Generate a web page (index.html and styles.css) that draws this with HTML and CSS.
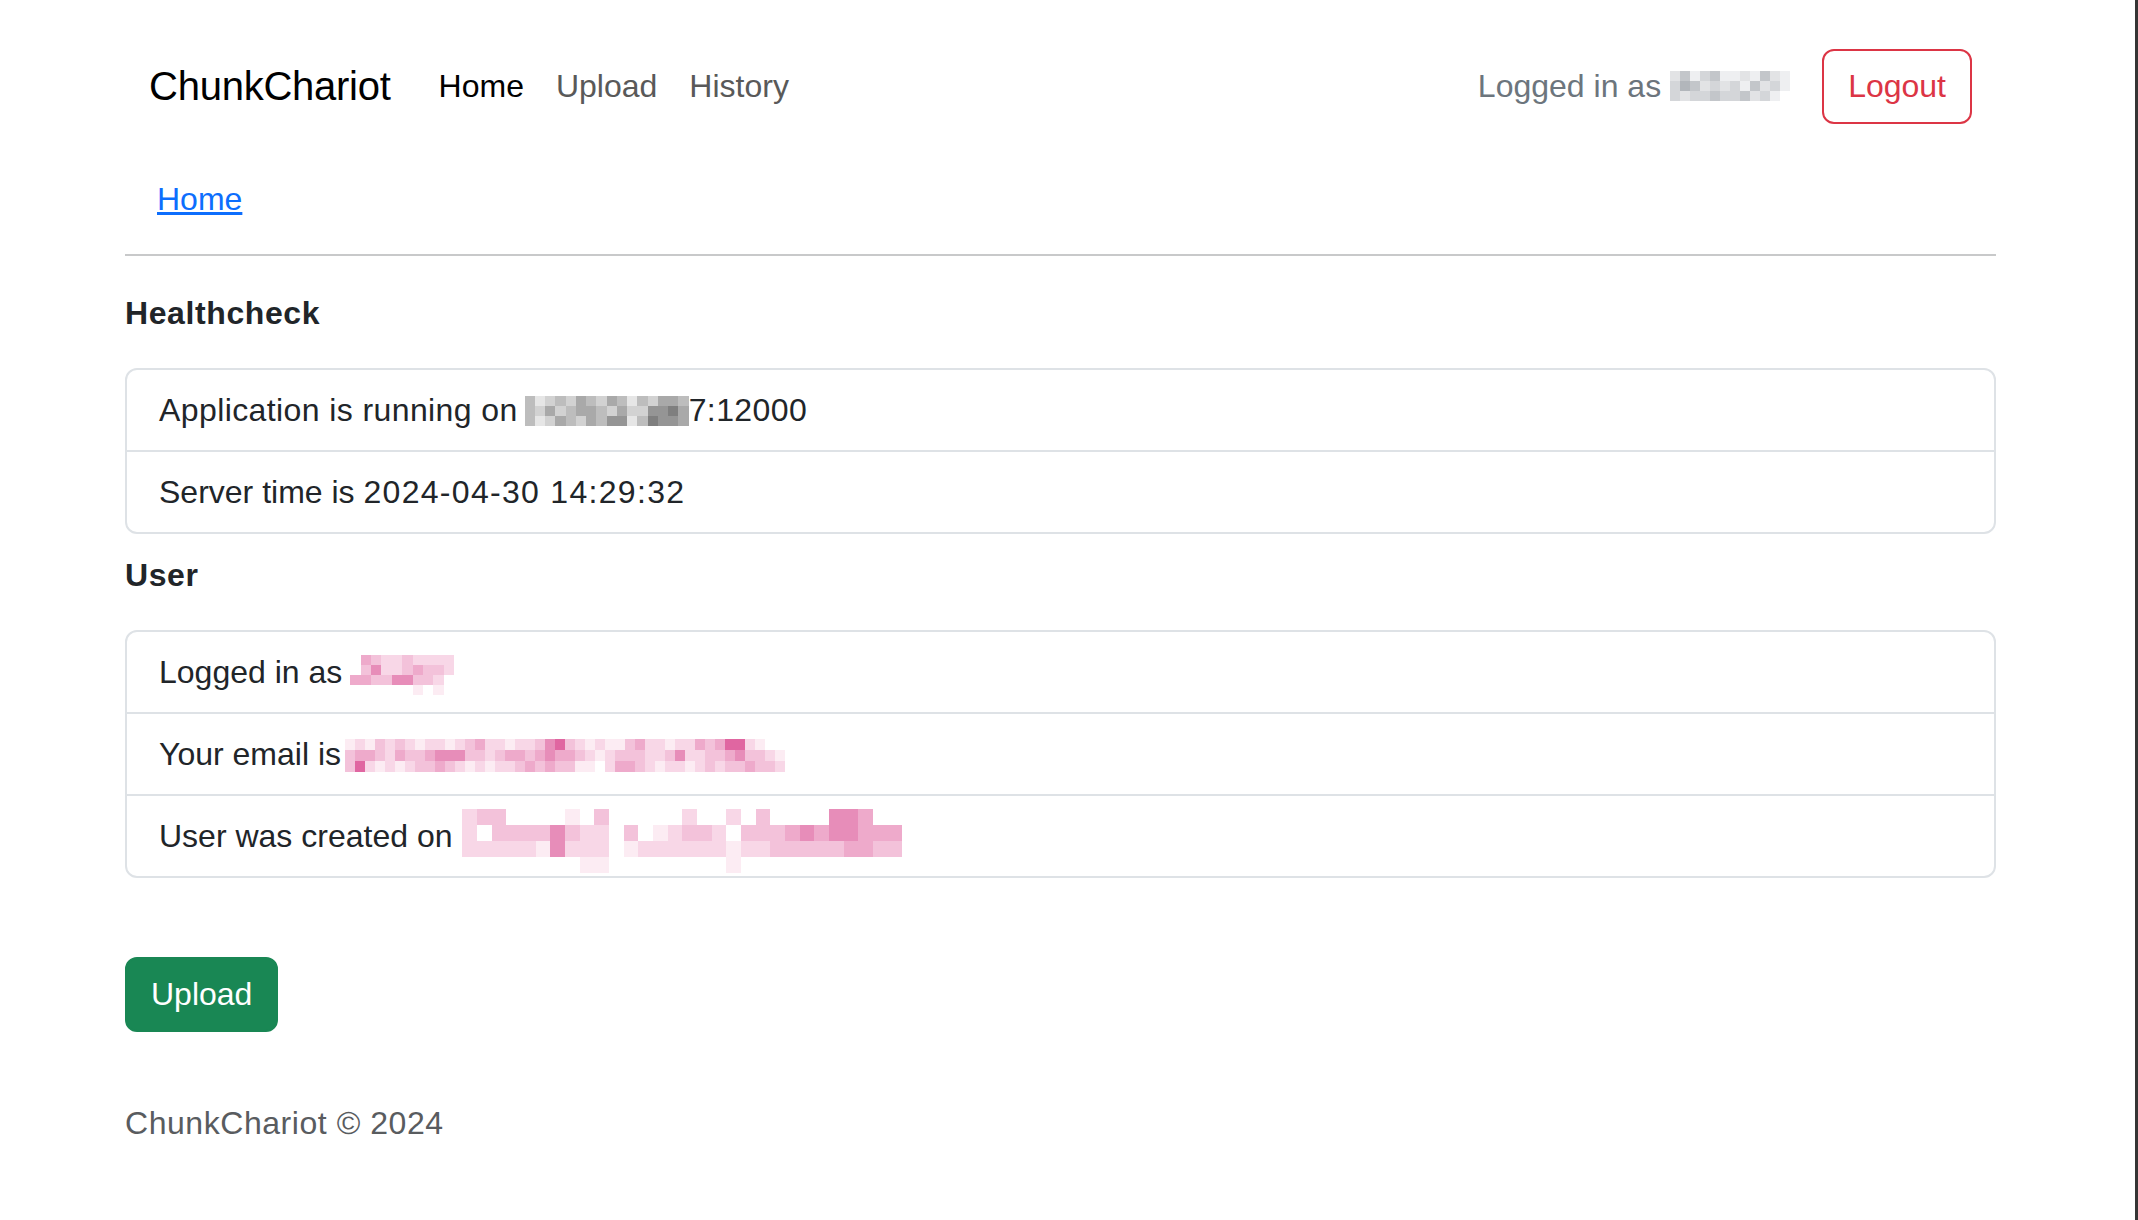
FILE: index.html
```html
<!DOCTYPE html>
<html lang="en">
<head>
<meta charset="utf-8">
<title>ChunkChariot</title>
<link rel="stylesheet" href="styles.css">
</head>
<body>
<div class="page">
  <nav class="navbar">
    <a class="brand" href="#">ChunkChariot</a>
    <ul class="nav-links">
      <li><a class="nav-link active" href="#">Home</a></li>
      <li><a class="nav-link" href="#">Upload</a></li>
      <li><a class="nav-link" href="#">History</a></li>
    </ul>
    <div class="nav-right">
      <span class="nav-text">Logged in as</span>
      <span class="mz mz-nav"><i class="n2"></i><i class="n4"></i><i class="n1"></i><i class="n3"></i><i class="n4"></i><i class="n1"></i><i class="n1"></i><i class="n2"></i><i class="n1"></i><i class="n4"></i><i class="n2"></i><i class="n1"></i><i class="n3"></i><i class="n5"></i><i class="n4"></i><i class="n2"></i><i class="n3"></i><i class="n2"></i><i class="n3"></i><i class="n1"></i><i class="n4"></i><i class="n2"></i><i class="n3"></i><i class="n1"></i><i class="n3"></i><i class="n2"></i><i class="n3"></i><i class="n3"></i><i class="n4"></i><i class="n3"></i><i class="n3"></i><i class="n4"></i><i class="n2"></i><i class="n3"></i><i class="n1"></i><i class="n0"></i></span>
      <button class="btn btn-outline-danger" type="button">Logout</button>
    </div>
  </nav>

  <nav class="crumbs"><a class="crumb-link" href="#">Home</a></nav>
  <hr class="rule">

  <div class="section-title">Healthcheck</div>
  <ul class="list-group">
    <li class="item item-wide">Application is running on<span class="mz mz-host"><i class="g3"></i><i class="g1"></i><i class="g2"></i><i class="g3"></i><i class="g2"></i><i class="g4"></i><i class="g3"></i><i class="g2"></i><i class="g4"></i><i class="g3"></i><i class="g1"></i><i class="g3"></i><i class="g2"></i><i class="g4"></i><i class="g4"></i><i class="g3"></i><i class="g3"></i><i class="g2"></i><i class="g4"></i><i class="g2"></i><i class="g3"></i><i class="g4"></i><i class="g4"></i><i class="g3"></i><i class="g2"></i><i class="g4"></i><i class="g2"></i><i class="g2"></i><i class="g5"></i><i class="g5"></i><i class="g6"></i><i class="g4"></i><i class="g3"></i><i class="g1"></i><i class="g2"></i><i class="g4"></i><i class="g3"></i><i class="g2"></i><i class="g4"></i><i class="g3"></i><i class="g5"></i><i class="g5"></i><i class="g1"></i><i class="g3"></i><i class="g6"></i><i class="g5"></i><i class="g5"></i><i class="g4"></i></span>7:12000</li>
    <li class="item">Server time is&nbsp;<span class="stamp">2024-04-30 14:29:32</span></li>
  </ul>

  <div class="section-title section-title-next">User</div>
  <ul class="list-group">
    <li class="item">Logged in as<span class="mz mz-login"><i class="k0"></i><i class="k4"></i><i class="k3"></i><i class="k2"></i><i class="k2"></i><i class="k3"></i><i class="k2"></i><i class="k2"></i><i class="k2"></i><i class="k2"></i><i class="k0"></i><i class="k3"></i><i class="k5"></i><i class="k2"></i><i class="k2"></i><i class="k3"></i><i class="k4"></i><i class="k3"></i><i class="k3"></i><i class="k2"></i><i class="k4"></i><i class="k4"></i><i class="k3"></i><i class="k3"></i><i class="k5"></i><i class="k5"></i><i class="k3"></i><i class="k3"></i><i class="k2"></i><i class="k0"></i><i class="k0"></i><i class="k0"></i><i class="k0"></i><i class="k0"></i><i class="k0"></i><i class="k0"></i><i class="k1"></i><i class="k0"></i><i class="k1"></i><i class="k0"></i></span></li>
    <li class="item">Your email is<span class="mz mz-email"><i class="k1"></i><i class="k2"></i><i class="k1"></i><i class="k3"></i><i class="k2"></i><i class="k3"></i><i class="k2"></i><i class="k1"></i><i class="k2"></i><i class="k2"></i><i class="k1"></i><i class="k2"></i><i class="k3"></i><i class="k4"></i><i class="k2"></i><i class="k2"></i><i class="k1"></i><i class="k2"></i><i class="k2"></i><i class="k3"></i><i class="k5"></i><i class="k6"></i><i class="k3"></i><i class="k2"></i><i class="k1"></i><i class="k2"></i><i class="k1"></i><i class="k1"></i><i class="k3"></i><i class="k4"></i><i class="k2"></i><i class="k2"></i><i class="k1"></i><i class="k2"></i><i class="k2"></i><i class="k4"></i><i class="k3"></i><i class="k4"></i><i class="k6"></i><i class="k6"></i><i class="k2"></i><i class="k1"></i><i class="k0"></i><i class="k0"></i><i class="k3"></i><i class="k4"></i><i class="k4"></i><i class="k3"></i><i class="k2"></i><i class="k4"></i><i class="k3"></i><i class="k3"></i><i class="k4"></i><i class="k5"></i><i class="k5"></i><i class="k5"></i><i class="k3"></i><i class="k3"></i><i class="k2"></i><i class="k3"></i><i class="k4"></i><i class="k4"></i><i class="k3"></i><i class="k4"></i><i class="k5"></i><i class="k4"></i><i class="k4"></i><i class="k3"></i><i class="k2"></i><i class="k1"></i><i class="k2"></i><i class="k3"></i><i class="k3"></i><i class="k3"></i><i class="k2"></i><i class="k2"></i><i class="k3"></i><i class="k5"></i><i class="k2"></i><i class="k2"></i><i class="k3"></i><i class="k3"></i><i class="k4"></i><i class="k5"></i><i class="k3"></i><i class="k3"></i><i class="k2"></i><i class="k1"></i><i class="k3"></i><i class="k6"></i><i class="k2"></i><i class="k1"></i><i class="k2"></i><i class="k1"></i><i class="k2"></i><i class="k3"></i><i class="k3"></i><i class="k4"></i><i class="k3"></i><i class="k2"></i><i class="k1"></i><i class="k2"></i><i class="k1"></i><i class="k2"></i><i class="k2"></i><i class="k3"></i><i class="k4"></i><i class="k3"></i><i class="k4"></i><i class="k3"></i><i class="k3"></i><i class="k1"></i><i class="k1"></i><i class="k0"></i><i class="k2"></i><i class="k4"></i><i class="k4"></i><i class="k3"></i><i class="k2"></i><i class="k1"></i><i class="k2"></i><i class="k2"></i><i class="k1"></i><i class="k2"></i><i class="k3"></i><i class="k2"></i><i class="k3"></i><i class="k3"></i><i class="k4"></i><i class="k3"></i><i class="k3"></i><i class="k2"></i></span></li>
    <li class="item">User was created on<span class="mz mz-created"><i class="k2"></i><i class="k3"></i><i class="k3"></i><i class="k0"></i><i class="k0"></i><i class="k0"></i><i class="k0"></i><i class="k1"></i><i class="k0"></i><i class="k3"></i><i class="k0"></i><i class="k0"></i><i class="k0"></i><i class="k0"></i><i class="k0"></i><i class="k2"></i><i class="k0"></i><i class="k0"></i><i class="k2"></i><i class="k0"></i><i class="k3"></i><i class="k0"></i><i class="k0"></i><i class="k0"></i><i class="k0"></i><i class="k5"></i><i class="k5"></i><i class="k4"></i><i class="k0"></i><i class="k0"></i><i class="k2"></i><i class="k0"></i><i class="k3"></i><i class="k3"></i><i class="k3"></i><i class="k3"></i><i class="k5"></i><i class="k3"></i><i class="k2"></i><i class="k2"></i><i class="k0"></i><i class="k3"></i><i class="k0"></i><i class="k1"></i><i class="k2"></i><i class="k3"></i><i class="k3"></i><i class="k2"></i><i class="k0"></i><i class="k3"></i><i class="k3"></i><i class="k3"></i><i class="k4"></i><i class="k5"></i><i class="k4"></i><i class="k5"></i><i class="k5"></i><i class="k4"></i><i class="k4"></i><i class="k4"></i><i class="k2"></i><i class="k2"></i><i class="k2"></i><i class="k2"></i><i class="k2"></i><i class="k1"></i><i class="k5"></i><i class="k2"></i><i class="k2"></i><i class="k2"></i><i class="k0"></i><i class="k1"></i><i class="k2"></i><i class="k2"></i><i class="k2"></i><i class="k2"></i><i class="k2"></i><i class="k2"></i><i class="k1"></i><i class="k2"></i><i class="k2"></i><i class="k3"></i><i class="k3"></i><i class="k3"></i><i class="k3"></i><i class="k3"></i><i class="k4"></i><i class="k4"></i><i class="k3"></i><i class="k3"></i><i class="k0"></i><i class="k0"></i><i class="k0"></i><i class="k0"></i><i class="k0"></i><i class="k0"></i><i class="k0"></i><i class="k0"></i><i class="k1"></i><i class="k1"></i><i class="k0"></i><i class="k0"></i><i class="k0"></i><i class="k0"></i><i class="k0"></i><i class="k0"></i><i class="k0"></i><i class="k0"></i><i class="k1"></i><i class="k0"></i><i class="k0"></i><i class="k0"></i><i class="k0"></i><i class="k0"></i><i class="k0"></i><i class="k0"></i><i class="k0"></i><i class="k0"></i><i class="k0"></i><i class="k0"></i></span></li>
  </ul>

  <button class="btn btn-success" type="button">Upload</button>

  <footer class="footer">ChunkChariot © 2024</footer>
</div>
</body>
</html>
```

FILE: styles.css
```css
html, body {
  margin: 0;
  padding: 0;
  background: #ffffff;
}

body {
  min-height: 1220px;
  box-sizing: border-box;
  border-right: 3px solid #353535;
  font-family: "Liberation Sans", Arial, sans-serif;
  font-size: 32px;
  line-height: 48px;
  color: #212529;
}

.page {
  width: 1871px;
  margin-left: 125px;
  padding-bottom: 40px;
}

/* ---------- navbar ---------- */
.navbar {
  display: flex;
  align-items: center;
  margin-top: 30px;
  padding: 16px 24px;
}

.brand {
  font-size: 40px;
  line-height: 60px;
  letter-spacing: -0.25px;
  padding: 10px 0;
  margin-right: 32px;
  color: #000000;
  text-decoration: none;
}

.nav-links {
  display: flex;
  list-style: none;
  margin: 0;
  padding: 0;
}

.nav-link {
  display: block;
  padding: 16px 16px;
  color: #595959;
  text-decoration: none;
}

.nav-link.active {
  color: #000000;
}

.nav-right {
  display: flex;
  align-items: center;
  margin-left: auto;
}

.nav-text {
  color: #6c757d;
  padding: 16px 0;
}

/* ---------- buttons ---------- */
.btn {
  font: inherit;
  font-size: 32px;
  line-height: 47px;
  padding: 12px 24px;
  border: 2px solid transparent;
  border-radius: 12px;
  background: transparent;
  cursor: pointer;
}

.btn-outline-danger {
  margin-left: 32px;
  color: #dc3545;
  border-color: #dc3545;
}

.btn-success {
  display: block;
  margin-top: 79px;
  color: #ffffff;
  background: #198754;
  border-color: #198754;
}

/* ---------- breadcrumb ---------- */
.crumbs {
  margin-top: 33px;
  padding-left: 32px;
}

.crumb-link {
  color: #0d6efd;
  text-decoration: underline;
}

.rule {
  margin: 31px 0 0;
  border: 0;
  border-top: 2px solid #c8c9ca;
  height: 0;
}

/* ---------- sections ---------- */
.section-title {
  font-weight: 700;
  letter-spacing: 0.6px;
  margin-top: 33px;
  margin-bottom: 31px;
}

.section-title-next {
  margin-top: 17px;
  margin-bottom: 31px;
}

.list-group {
  list-style: none;
  margin: 0;
  padding: 0;
  border: 2px solid #dee2e6;
  border-radius: 12px;
}

.item {
  display: flex;
  align-items: flex-start;
  padding: 16px 32px;
  line-height: 48px;
}

.item + .item {
  border-top: 2px solid #dee2e6;
}

.item-wide {
  letter-spacing: 0.4px;
}

.stamp {
  letter-spacing: 1.3px;
}

/* ---------- footer ---------- */
.footer {
  margin-top: 67px;
  letter-spacing: 0.55px;
  color: #595c5f;
}

/* ---------- pixelated (redacted) blocks ---------- */
.mz {
  display: grid;
  flex: none;
}

.mz i {
  display: block;
}

.mz-nav {
  margin-left: 9px;
  grid-template-columns: repeat(12, 10px);
  grid-auto-rows: 10px;
}

.mz-host {
  margin: 10px 0 0 7px;
  grid-template-columns: repeat(16, 10.25px);
  grid-auto-rows: 10px;
}

.mz-login {
  margin: 7px 0 0 8px;
  grid-template-columns: repeat(10, 10.4px);
  grid-auto-rows: 10px;
}

.mz-email {
  margin: 9px 0 0 4px;
  grid-template-columns: repeat(44, 10px);
  grid-auto-rows: 11px;
}

.mz-created {
  margin: -3px 0 -13px 10px;
  grid-template-columns: repeat(30, 14.67px);
  grid-auto-rows: 16px;
}

/* navbar grey */
.n0 { background: #ffffff; }
.n1 { background: #eeeff1; }
.n2 { background: #e2e3e5; }
.n3 { background: #d4d6d9; }
.n4 { background: #c3c6ca; }
.n5 { background: #b2b6bb; }

/* host grey */
.g0 { background: #ffffff; }
.g1 { background: #e6e6e6; }
.g2 { background: #d2d2d2; }
.g3 { background: #bdbdbd; }
.g4 { background: #a9a9a9; }
.g5 { background: #959595; }
.g6 { background: #7f7f7f; }

/* pink */
.k0 { background: #ffffff; }
.k1 { background: #fcecf3; }
.k2 { background: #f8d7e7; }
.k3 { background: #f3c2da; }
.k4 { background: #eeaacb; }
.k5 { background: #e78db9; }
.k6 { background: #e066a1; }
```
